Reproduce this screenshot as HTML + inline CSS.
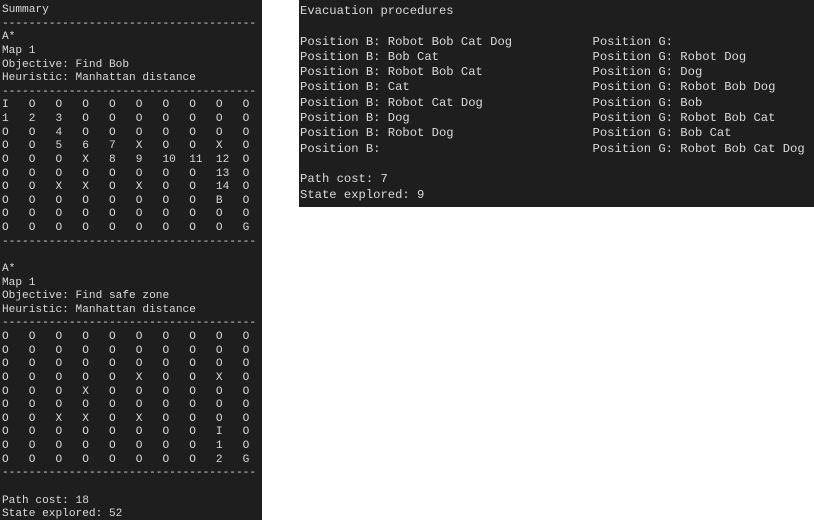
<!DOCTYPE html>
<html><head><style>
body{margin:0;width:814px;height:522px;background:#fff;position:relative;overflow:hidden}
pre{margin:0;position:absolute;background:#1e1e1e;color:#dadada;font-family:"Liberation Mono",monospace;white-space:pre}
#l{left:0;top:0;width:262px;height:520px;font-size:11.15px;line-height:13.62px;padding:4px 0 0 2px;box-sizing:border-box}
#r{left:299px;top:0;width:515px;height:207px;font-size:12.2px;line-height:15.3px;padding:4px 0 0 1px;box-sizing:border-box}
</style></head><body>
<pre id="l">Summary
--------------------------------------
A*
Map 1
Objective: Find Bob
Heuristic: Manhattan distance
--------------------------------------
I   O   O   O   O   O   O   O   O   O
1   2   3   O   O   O   O   O   O   O
O   O   4   O   O   O   O   O   O   O
O   O   5   6   7   X   O   O   X   O
O   O   O   X   8   9   10  11  12  O
O   O   O   O   O   O   O   O   13  O
O   O   X   X   O   X   O   O   14  O
O   O   O   O   O   O   O   O   B   O
O   O   O   O   O   O   O   O   O   O
O   O   O   O   O   O   O   O   O   G
--------------------------------------

A*
Map 1
Objective: Find safe zone
Heuristic: Manhattan distance
--------------------------------------
O   O   O   O   O   O   O   O   O   O
O   O   O   O   O   O   O   O   O   O
O   O   O   O   O   O   O   O   O   O
O   O   O   O   O   X   O   O   X   O
O   O   O   X   O   O   O   O   O   O
O   O   O   O   O   O   O   O   O   O
O   O   X   X   O   X   O   O   O   O
O   O   O   O   O   O   O   O   I   O
O   O   O   O   O   O   O   O   1   O
O   O   O   O   O   O   O   O   2   G
--------------------------------------

Path cost: 18
State explored: 52</pre>
<pre id="r">Evacuation procedures

Position B: Robot Bob Cat Dog           Position G:
Position B: Bob Cat                     Position G: Robot Dog
Position B: Robot Bob Cat               Position G: Dog
Position B: Cat                         Position G: Robot Bob Dog
Position B: Robot Cat Dog               Position G: Bob
Position B: Dog                         Position G: Robot Bob Cat
Position B: Robot Dog                   Position G: Bob Cat
Position B:                             Position G: Robot Bob Cat Dog

Path cost: 7
State explored: 9</pre>
</body></html>
